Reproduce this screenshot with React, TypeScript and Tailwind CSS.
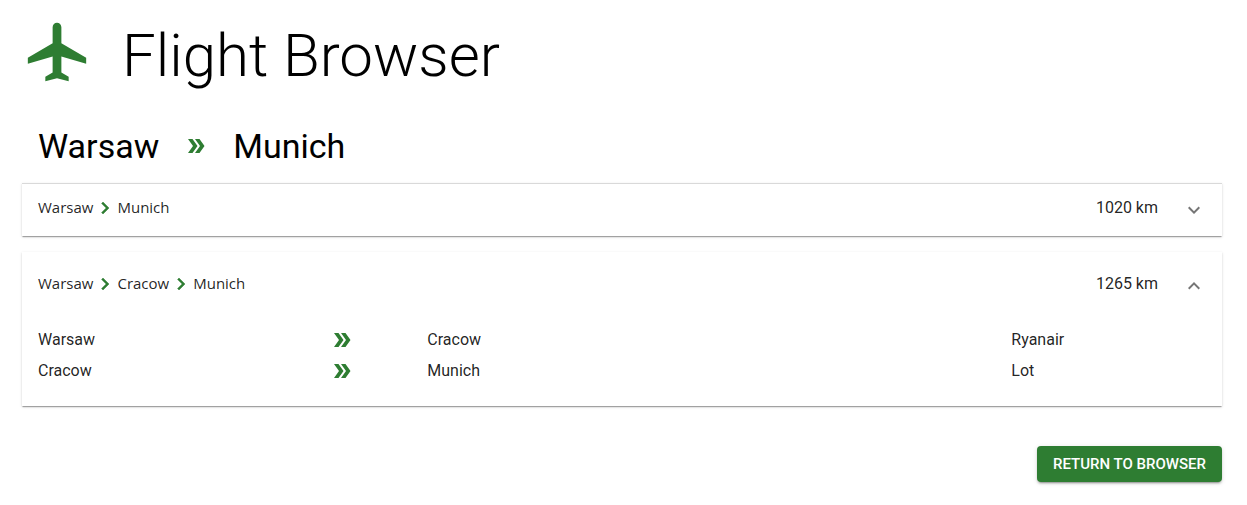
import { Fragment, useState } from "react";
import { MdDoubleArrow, MdExpandLess, MdExpandMore, MdLocalAirport } from "react-icons/md";

type Leg = { from: string; to: string; airline: string };
type Route = { stops: string[]; distance: number; legs: Leg[] };

const routes: Route[] = [
  {
    stops: ["Warsaw", "Munich"],
    distance: 1020,
    legs: [{ from: "Warsaw", to: "Munich", airline: "Lufthansa" }],
  },
  {
    stops: ["Warsaw", "Cracow", "Munich"],
    distance: 1265,
    legs: [
      { from: "Warsaw", to: "Cracow", airline: "Ryanair" },
      { from: "Cracow", to: "Munich", airline: "Lot" },
    ],
  },
];

const paperShadow =
  "shadow-[0_2px_1px_-1px_rgba(0,0,0,0.2),0_1px_1px_0_rgba(0,0,0,0.14),0_1px_3px_0_rgba(0,0,0,0.12)]";

function NextIcon() {
  return (
    <svg viewBox="0 0 24 24" aria-hidden="true" className="size-6 fill-[#2e7d32]">
      <path
        d="M10 6 8.59 7.41 13.17 12l-4.58 4.59L10 18l6-6z"
        stroke="#2e7d32"
        strokeWidth="0.5"
      />
    </svg>
  );
}

function RouteCard({
  route,
  open,
  first,
  onToggle,
}: {
  route: Route;
  open: boolean;
  first: boolean;
  onToggle: () => void;
}) {
  const Chevron = open ? MdExpandLess : MdExpandMore;
  return (
    <section className={`bg-white ${paperShadow} ${first ? "border-t border-black/15" : ""}`}>
      <button
        type="button"
        aria-expanded={open}
        onClick={onToggle}
        className={`flex w-full cursor-pointer items-start px-4 text-left ${open ? "h-16 pt-5" : "h-[52px] pt-3"}`}
      >
        <span className="flex grow items-start font-['Open_Sans',sans-serif] text-[15px] leading-[22px]">
          {route.stops.map((stop, i) => (
            <Fragment key={stop}>
              {i > 0 && <NextIcon />}
              <span>{stop}</span>
            </Fragment>
          ))}
        </span>
        <span className="mr-6 leading-6">{route.distance} km</span>
        <Chevron className="mt-[2px] size-6 text-black/54" />
      </button>
      {open && (
        <ul className="px-4 pt-2 pb-5">
          {route.legs.map((leg) => (
            <li key={leg.from} className="grid h-[31px] grid-cols-12 items-center leading-6">
              <span className="col-span-3">{leg.from}</span>
              <MdDoubleArrow className="size-6 text-[#2e7d32]" />
              <span className="col-span-6">{leg.to}</span>
              <span className="col-span-2">{leg.airline}</span>
            </li>
          ))}
        </ul>
      )}
    </section>
  );
}

export default function App() {
  const [openRoutes, setOpenRoutes] = useState([false, true]);
  const toggle = (index: number) =>
    setOpenRoutes((state) => state.map((open, i) => (i === index ? !open : open)));

  return (
    <main className="bg-white pt-[17px] pr-[25px] pb-6 pl-[22px] font-[Roboto,sans-serif] text-base text-black/87">
      <header className="flex items-start gap-[30px] text-black">
        <MdLocalAirport className="size-[70px] text-[#2e7d32]" />
        <h1 className="pt-[3px] text-[60px] leading-[72px] font-light">Flight Browser</h1>
      </header>
      <h2 className="mt-[33px] flex items-center gap-[25px] px-4 text-[34px] leading-[42px] text-black">
        <span>Warsaw</span>
        <MdDoubleArrow className="size-6 text-[#2e7d32]" />
        <span>Munich</span>
      </h2>
      <div className="mt-4 flex flex-col gap-4">
        {routes.map((route, i) => (
          <RouteCard
            key={route.distance}
            route={route}
            first={i === 0}
            open={openRoutes[i]}
            onToggle={() => toggle(i)}
          />
        ))}
      </div>
      <div className="mt-10 flex justify-end">
        <button
          type="button"
          className="h-9 cursor-pointer rounded bg-[#2e7d32] px-4 text-[15px] font-medium text-white uppercase shadow-[0_3px_1px_-2px_rgba(0,0,0,0.2),0_2px_2px_0_rgba(0,0,0,0.14),0_1px_5px_0_rgba(0,0,0,0.12)]"
        >
          Return to browser
        </button>
      </div>
    </main>
  );
}
